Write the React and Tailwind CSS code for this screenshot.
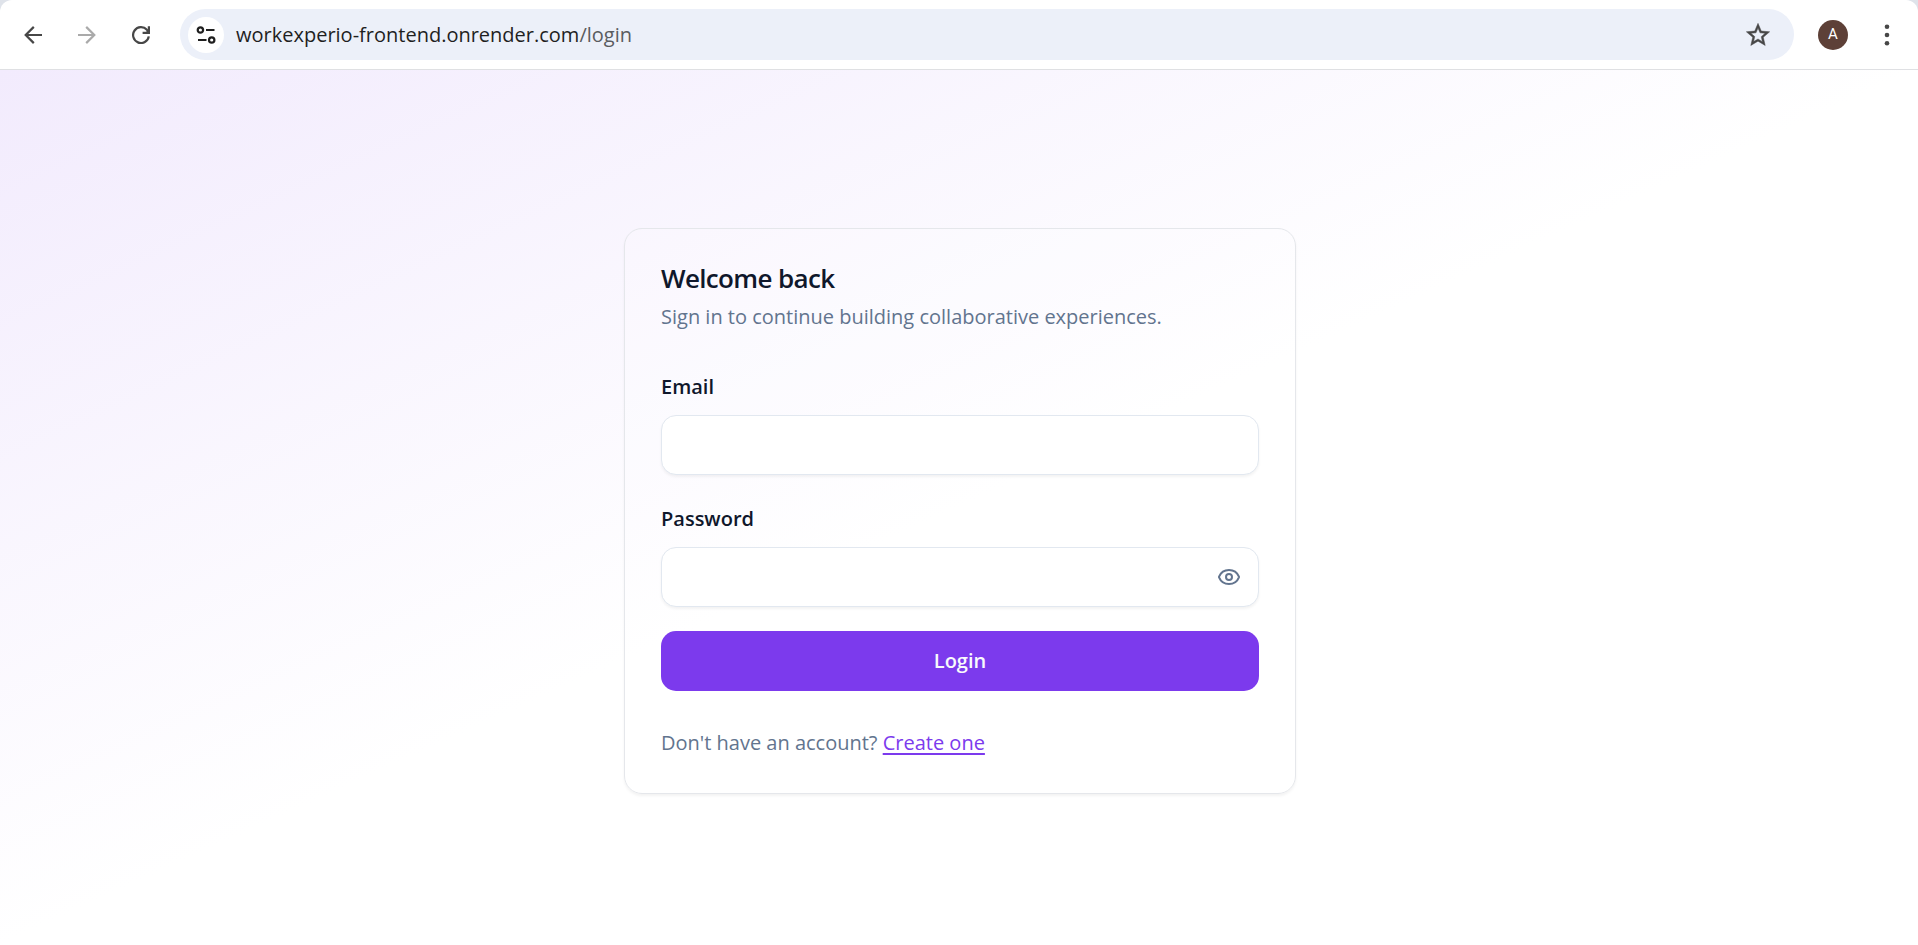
import React, { useState } from 'react';

// ─────────────────────────────────────────────
//  Browser toolbar icons
// ─────────────────────────────────────────────
const ArrowIcon = ({ className = '' }) => (
  <svg viewBox="0 0 18 18" fill="none" stroke="currentColor" strokeWidth="2.2" className={`w-[18px] h-[18px] ${className}`}>
    <path d="M18 9H1.7M9.8 0.9 1.7 9l8.1 8.1" />
  </svg>
);

const ReloadIcon = () => (
  <svg viewBox="0 0 18 18" fill="none" stroke="currentColor" strokeWidth="2.2" className="w-[18px] h-[18px]">
    <path d="M16.8 10.4A7.9 7.9 0 1 1 14.9 3.8L16.4 5.4" />
    <path d="M16.9 0.2V6.9H10.6" />
    <path d="M17 3.4V7h-4.4z" fill="currentColor" stroke="none" />
  </svg>
);

const TuneIcon = () => (
  <svg viewBox="0 0 20 18" fill="none" stroke="currentColor" strokeWidth="2.2" className="w-5 h-[18px]">
    <circle cx="4.4" cy="4" r="2.7" />
    <path d="M10 4h8.5M2 14h8.5" />
    <circle cx="15.7" cy="14" r="2.7" />
  </svg>
);

const StarIcon = () => (
  <svg viewBox="0 0 24 24" fill="currentColor" stroke="currentColor" strokeWidth="0.4" className="w-7 h-7">
    <path d="M22 9.24l-7.19-.62L12 2 9.19 8.63 2 9.24l5.46 4.73L5.82 21 12 17.27 18.18 21l-1.63-7.03L22 9.24zM12 15.4l-3.76 2.27 1-4.28-3.32-2.88 4.38-.38L12 6.1l1.71 4.04 4.38.38-3.32 2.88 1 4.28L12 15.4z" />
  </svg>
);

const DotsIcon = () => (
  <svg viewBox="0 0 6 22" fill="currentColor" className="w-[6px] h-[22px]">
    <circle cx="3" cy="2.8" r="2.3" />
    <circle cx="3" cy="11" r="2.3" />
    <circle cx="3" cy="19.2" r="2.3" />
  </svg>
);

const EyeIcon = () => (
  <svg viewBox="0 0 24 24" fill="none" stroke="currentColor" strokeWidth="2" strokeLinecap="round" strokeLinejoin="round" className="w-6 h-6">
    <path d="M2.06 12.35a1 1 0 0 1 0-.7 10.75 10.75 0 0 1 19.88 0 1 1 0 0 1 0 .7 10.75 10.75 0 0 1-19.88 0" />
    <circle cx="12" cy="12" r="3" />
  </svg>
);

// ─────────────────────────────────────────────
//  BrowserBar  —  navigation, address and profile
// ─────────────────────────────────────────────
const BrowserBar = () => (
  <header className="bg-[#dfe3ea]">
    <div className="flex items-center h-[70px] pl-6 pr-7 bg-white border-b border-[#dfe0e3] rounded-t-xl text-[#474747]">
      <div className="flex items-center gap-9 mr-[30px]">
        <button type="button" aria-label="Back"><ArrowIcon /></button>
        <button type="button" aria-label="Forward" className="text-[#aaaaaa]"><ArrowIcon className="rotate-180" /></button>
        <button type="button" aria-label="Reload"><ReloadIcon /></button>
      </div>

      <div className="flex flex-1 items-center h-[51px] pl-2 pr-[22px] rounded-full bg-[#ecf0f9]">
        <button type="button" aria-label="Site information" className="flex items-center justify-center w-9 h-9 rounded-full bg-white text-[#1f1f1f]">
          <TuneIcon />
        </button>
        <div className="flex-1 pl-3 text-[20px] leading-7 text-[#1f1f1f]">
          workexperio-frontend.onrender.com<span className="text-[#5a5c60]">/login</span>
        </div>
        <button type="button" aria-label="Bookmark"><StarIcon /></button>
      </div>

      <button type="button" aria-label="Profile" className="flex items-center justify-center w-[30px] h-[30px] ml-6 mr-9 rounded-full bg-[#5d4037] text-white font-['Roboto',sans-serif] font-normal text-[15px]">
        A
      </button>
      <button type="button" aria-label="Menu"><DotsIcon /></button>
    </div>
  </header>
);

// ─────────────────────────────────────────────
//  LoginCard
// ─────────────────────────────────────────────
const inputClass =
  'block w-full h-[60px] px-4 rounded-[15px] border border-slate-200 bg-white shadow-[0_2px_3px_rgba(0,0,0,0.05)] outline-none text-[20px]';

const LoginCard = () => {
  const [showPassword, setShowPassword] = useState(false);

  return (
    <section className="w-full max-w-[672px] px-9 pt-9 pb-[34px] rounded-[18px] border border-gray-200 bg-white/10 shadow-[0_2px_3px_rgba(0,0,0,0.05)]">
      <h1 className="text-[26px] leading-[26px] font-semibold tracking-tight text-slate-900">Welcome back</h1>
      <p className="mt-[10px] text-[20px] leading-8 text-slate-500">
        Sign in to continue building collaborative experiences.
      </p>

      <form className="mt-[38px]" onSubmit={(e) => e.preventDefault()}>
        <label htmlFor="email" className="block mb-3 text-[20px] leading-8 font-semibold">Email</label>
        <input id="email" type="email" className={inputClass} />

        <label htmlFor="password" className="block mt-7 mb-3 text-[20px] leading-8 font-semibold">Password</label>
        <div className="relative">
          <input id="password" type={showPassword ? 'text' : 'password'} className={inputClass} />
          <button
            type="button"
            aria-label="Show password"
            onClick={() => setShowPassword(!showPassword)}
            className="absolute inset-y-0 right-[18px] text-slate-500"
          >
            <EyeIcon />
          </button>
        </div>

        <button type="submit" className="w-full h-[60px] mt-6 rounded-[15px] bg-[#7c3aed] text-[20px] font-semibold text-slate-50">
          Login
        </button>
      </form>

      <p className="mt-9 text-[20px] leading-8 text-slate-500">
        Don't have an account?{' '}
        <a href="#register" className="text-[#7c3aed] underline decoration-2 underline-offset-3">Create one</a>
      </p>
    </section>
  );
};

const App = () => (
  <div className="flex flex-col min-h-screen bg-white text-slate-900 font-['Open_Sans',sans-serif]">
    <BrowserBar />
    <main className="flex flex-1 items-center justify-center pt-1.5 pl-0.5 bg-linear-to-br/srgb from-[#f2ebfd] via-white to-white">
      <LoginCard />
    </main>
  </div>
);

export default App;
